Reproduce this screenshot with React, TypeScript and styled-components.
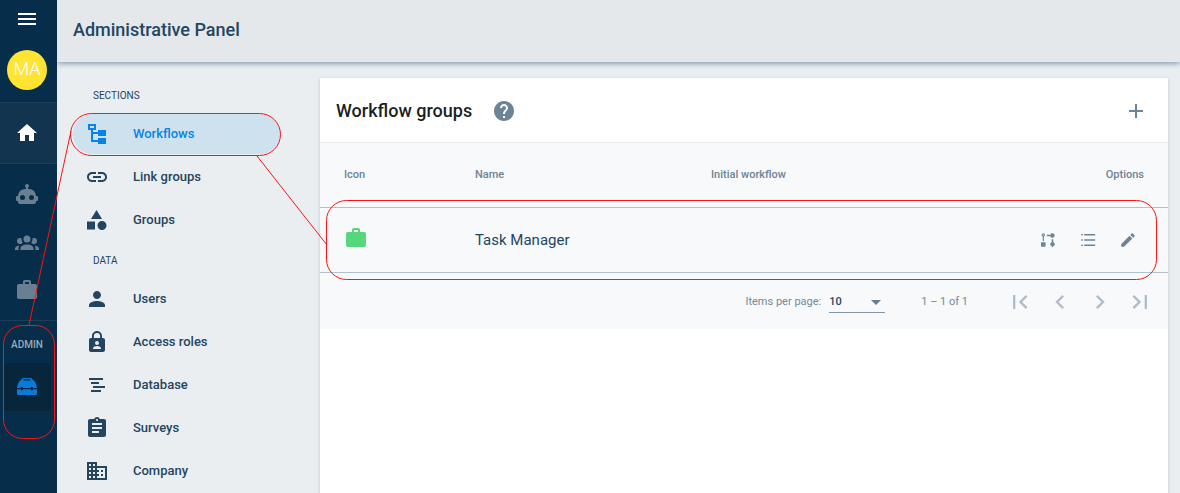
import React from "react";
import styled, { createGlobalStyle } from "styled-components";

const GlobalStyle = createGlobalStyle`
  *, *::before, *::after { box-sizing: border-box; }
  body {
    margin: 0;
    font-family: Roboto, "Liberation Sans", sans-serif;
    color: #24455f;
    background: #eaeef1;
  }
  button { font: inherit; border: 0; padding: 0; background: none; cursor: pointer; color: inherit; }
  h1, h2 { margin: 0; }
`;

/* ---------- Icons ---------- */

type IconProps = { d: string; size?: number };

const Svg = styled.svg`
  display: block;
  flex: none;
  fill: currentColor;
`;

const Icon = ({ d, size = 24 }: IconProps) => (
  <Svg width={size} height={size} viewBox="0 0 24 24" aria-hidden="true">
    <path fillRule="evenodd" d={d} />
  </Svg>
);

const paths = {
  menu: "M3 18h18v-2H3v2zm0-5h18v-2H3v2zm0-7v2h18V6H3z",
  home: "M10 20v-6h4v6h5v-8h3L12 3 2 12h3v8z",
  robot:
    "M12 2a2 2 0 0 1 2 2c0 .74-.4 1.39-1 1.73V7h1a7 7 0 0 1 7 7h1a1 1 0 0 1 1 1v3a1 1 0 0 1-1 1h-1v1a2 2 0 0 1-2 2H5a2 2 0 0 1-2-2v-1H2a1 1 0 0 1-1-1v-3a1 1 0 0 1 1-1h1a7 7 0 0 1 7-7h1V5.73c-.6-.34-1-.99-1-1.73a2 2 0 0 1 2-2M7.5 13A2.5 2.5 0 0 0 5 15.5 2.5 2.5 0 0 0 7.5 18a2.5 2.5 0 0 0 2.5-2.5A2.5 2.5 0 0 0 7.5 13m9 0a2.5 2.5 0 0 0-2.5 2.5 2.5 2.5 0 0 0 2.5 2.5 2.5 2.5 0 0 0 2.5-2.5 2.5 2.5 0 0 0-2.5-2.5z",
  people:
    "M12 5.5A3.5 3.5 0 0 1 15.5 9 3.5 3.5 0 0 1 12 12.5 3.5 3.5 0 0 1 8.5 9 3.5 3.5 0 0 1 12 5.5M5 8c.56 0 1.08.15 1.53.42-.15 1.43.27 2.85 1.13 3.96C7.16 13.34 6.16 14 5 14a3 3 0 0 1-3-3 3 3 0 0 1 3-3m14 0a3 3 0 0 1 3 3 3 3 0 0 1-3 3c-1.16 0-2.16-.66-2.66-1.62.86-1.11 1.28-2.53 1.13-3.96C17.92 8.15 18.44 8 19 8M5.5 18.25c0-2.07 2.91-3.75 6.5-3.75s6.5 1.68 6.5 3.75V20h-13v-1.75M0 20v-1.5c0-1.39 1.89-2.56 4.45-2.9-.59.68-.95 1.62-.95 2.65V20H0m24 0h-3.5v-1.75c0-1.03-.36-1.97-.95-2.65 2.56.34 4.45 1.51 4.45 2.9V20z",
  briefcase:
    "M10 2h4a2 2 0 0 1 2 2v2h4a2 2 0 0 1 2 2v11a2 2 0 0 1-2 2H4a2 2 0 0 1-2-2V8c0-1.11.89-2 2-2h4V4c0-1.11.89-2 2-2m4 4V4h-4v2h4z",
  toolbox:
    "M8.500 3h7c.8 0 1.500.5 1.500 1.200C19.500 5.200 21.500 8.500 22 13H18V12H16V13H8V12H6V13H2C2.500 8.500 4.500 5.200 7 4.200 7 3.500 7.700 3 8.500 3zM8.500 4.300V5.400H15.500V4.300zM2 14.300H6V15.300H8V14.300H16V15.300H18V14.300H22V18.500A1.500 1.500 0 0 1 20.500 20H3.500A1.500 1.500 0 0 1 2 18.500z",
  tree: "M3 2h8v6H8v2h5V8h8v6h-8v-2H8v6h5v-2h8v6h-8v-2H6V8H3zM5 4v2h4V4z",
  link: "M3.9 12c0-1.71 1.39-3.1 3.1-3.1h4V7H7c-2.76 0-5 2.24-5 5s2.24 5 5 5h4v-1.900H7c-1.710 0-3.100-1.390-3.100-3.100zM8 13h8v-2H8v2zm9-6h-4v1.900h4c1.710 0 3.100 1.390 3.100 3.100s-1.390 3.100-3.100 3.100h-4V17h4c2.760 0 5-2.240 5-5s-2.240-5-5-5z",
  shapes:
    "M10 13.500v8H2v-8h8M11.500 2l5.500 9H6l5.500-9m5.500 11c2.500 0 4.500 2 4.500 4.500S19.500 22 17 22s-4.500-2-4.500-4.500 2-4.500 4.500-4.500z",
  person:
    "M12 12c2.210 0 4-1.790 4-4s-1.790-4-4-4-4 1.790-4 4 1.790 4 4 4zm0 2c-2.670 0-8 1.340-8 4v2h16v-2c0-2.660-5.330-4-8-4z",
  lockPerson:
    "M18 8h-1V6c0-2.760-2.240-5-5-5S7 3.240 7 6v2H6c-1.100 0-2 .9-2 2v10c0 1.100.9 2 2 2h12c1.100 0 2-.9 2-2V10c0-1.100-.9-2-2-2zM8.900 8V6a3.100 3.100 0 0 1 6.200 0v2zM12 11a2 2 0 1 1 0 4 2 2 0 0 1 0-4zM8 19v-.8c0-1.400 2.600-2.200 4-2.200s4 .8 4 2.200V19z",
  lines: "M4 5h14v2H4zM6 9h8v2H6zM8 13h12v2H8zM6 17h10v2H6z",
  assignment:
    "M19 3h-4.180C14.400 1.840 13.300 1 12 1c-1.300 0-2.400.84-2.820 2H5c-1.100 0-2 .9-2 2v14c0 1.100.9 2 2 2h14c1.100 0 2-.9 2-2V5c0-1.100-.9-2-2-2zm-7 0c.55 0 1 .45 1 1s-.45 1-1 1-1-.45-1-1 .45-1 1-1zm2 14H7v-2h7v2zm3-4H7v-2h10v2zm0-4H7V7h10v2z",
  domain:
    "M12 7V3H2v18h20V7H12zM6 19H4v-2h2v2zm0-4H4v-2h2v2zm0-4H4V9h2v2zm0-4H4V5h2v2zm4 12H8v-2h2v2zm0-4H8v-2h2v2zm0-4H8V9h2v2zm0-4H8V5h2v2zm10 12h-8v-2h2v-2h-2v-2h2v-2h-2V9h8v10zm-2-8h-2v2h2v-2zm0 4h-2v2h2v-2z",
  help: "M12 2C6.480 2 2 6.480 2 12s4.480 10 10 10 10-4.480 10-10S17.520 2 12 2zm1 17h-2v-2h2v2zm2.070-7.750l-.9.920C13.450 12.900 13 13.500 13 15h-2v-.5c0-1.100.45-2.100 1.170-2.830l1.240-1.260c.37-.36.59-.86.59-1.410 0-1.100-.9-2-2-2s-2 .9-2 2H8c0-2.210 1.790-4 4-4s4 1.790 4 4c0 .88-.36 1.680-.93 2.250z",
  plus: "M19 13h-6v6h-2v-6H5v-2h6V5h2v6h6v2z",
  flow: "M5.700 3a2.300 2.300 0 0 1 .8 4.450V13.500H5V7.450A2.300 2.300 0 0 1 5.700 3zM5.700 4.500a.8.8 0 1 0 .01 0zM2.700 15H8.700V21H2.700zM10.500 5H15.100A3 3 0 1 1 15.100 7H10.500zM17 11h2v3.200L21.500 17.500 18 21.500 14.500 17.500 17 14.200z",
  list: "M3 4h2v2H3zM7 4h14.500v2H7zM3 11h2v2H3zM7 11h14.500v2H7zM3 18h2v2H3zM7 18h14.500v2H7z",
  pencil:
    "M3 17.250V21h3.750L17.810 9.940l-3.750-3.750L3 17.250zM20.710 7.040c.39-.39.39-1.020 0-1.410l-2.340-2.340c-.39-.39-1.020-.39-1.410 0l-1.830 1.830 3.750 3.750 1.830-1.830z",
  first: "M18.410 16.590L13.820 12l4.590-4.590L17 6l-6 6 6 6zM6 6h2v12H6z",
  prev: "M15.410 7.410L14 6l-6 6 6 6 1.410-1.410L10.830 12z",
  next: "M10 6L8.590 7.410 13.170 12l-4.580 4.590L10 18l6-6z",
  last: "M5.590 7.410L10.180 12l-4.590 4.590L7 18l6-6-6-6zM16 6h2v12h-2z",
};

/* ---------- Shell ---------- */

const Page = styled.div`
  position: relative;
  display: flex;
  min-height: 100vh;
`;

const Rail = styled.nav`
  flex: none;
  width: 57px;
  background: #062d49;
  display: flex;
  flex-direction: column;
`;

const RailButton = styled.button`
  width: 54px;
  height: 38px;
  display: grid;
  place-items: center;
  color: #fff;
`;

const Avatar = styled.button`
  width: 40px;
  height: 40px;
  margin: 12px 7px;
  border-radius: 50%;
  background: #ffe434;
  color: #fff;
  font-size: 18px;
  font-weight: 300;
  line-height: 38px;
  padding-bottom: 2px;
`;

const RailLink = styled.a<{ $current?: boolean }>`
  height: ${(p) => (p.$current ? 62 : 48)}px;
  padding-right: 3px;
  display: grid;
  place-items: center;
  color: ${(p) => (p.$current ? "#fff" : "#6a8092")};
  background: ${(p) => (p.$current ? "#12344f" : "none")};
  border: solid #1d3e58;
  border-width: ${(p) => (p.$current ? "1px 0" : "0")};
`;

const RailGroup = styled.div`
  padding: 6px 0;
  border-bottom: 1px solid #1d3e58;
`;

const RailLabel = styled.div`
  height: 42px;
  padding: 4px 3px 0 0;
  display: grid;
  place-items: center;
  font-size: 10px;
  font-weight: 500;
  color: #9babb7;
`;

const AdminLink = styled.a`
  width: 48px;
  height: 48px;
  margin-left: 3px;
  display: grid;
  place-items: center;
  border-radius: 4px;
  background: #08263b;
  color: #0a7ad8;
`;

const Main = styled.main`
  flex: 1;
  min-width: 0;
  display: flex;
  flex-direction: column;
`;

const TopBar = styled.header`
  position: relative;
  height: 62px;
  padding: 0 16px;
  display: flex;
  align-items: center;
  background: #e4e8eb;
  box-shadow: 0 1px 6px #6f8ba2;
  clip-path: inset(0 0 -16px 0);
`;

const PageTitle = styled.h1`
  font-size: 18px;
  line-height: 24px;
  font-weight: 500;
  padding-bottom: 2px;
`;

const Body = styled.div`
  flex: 1;
  display: flex;
  padding: 16px 12px 0 16px;
`;

/* ---------- Section menu ---------- */

const SideMenu = styled.nav`
  flex: none;
  width: 247px;
`;

const MenuLabel = styled.div`
  height: 36px;
  padding-left: 20px;
  font-size: 10px;
  line-height: 36px;
`;

const MenuLink = styled.a<{ $active?: boolean }>`
  width: 207px;
  height: 40px;
  margin-bottom: 3px;
  padding-left: 12px;
  display: flex;
  align-items: center;
  gap: 24px;
  border-radius: 20px;
  font-size: 13px;
  line-height: 16px;
  font-weight: 500;
  text-decoration: none;
  color: ${(p) => (p.$active ? "#0784e9" : "#24455f")};
  background: ${(p) => (p.$active ? "#cee1ef" : "none")};
`;

/* ---------- Workflow panel ---------- */

const Panel = styled.section`
  flex: 1;
  min-width: 0;
  background: #fff;
  box-shadow: 0 1px 3px #24455f40;
`;

const PanelHeader = styled.header`
  height: 65px;
  padding: 2px 20px 0 16px;
  display: flex;
  align-items: center;
  gap: 20px;
  border-bottom: 1px solid #e6eaed;
  color: #6d8496;
`;

const PanelTitle = styled.h2`
  font-size: 18px;
  line-height: 24px;
  font-weight: 500;
  color: #1c1f21;
`;

const IconButton = styled.button<{ $size?: number; $end?: boolean }>`
  width: ${(p) => p.$size ?? 24}px;
  height: ${(p) => p.$size ?? 24}px;
  margin-left: ${(p) => (p.$end ? "auto" : "0")};
  display: grid;
  place-items: center;
`;

const Table = styled.table`
  width: 100%;
  table-layout: fixed;
  border-collapse: separate;
  border-spacing: 0;
  background: #f7f9fb;
`;

const HeadCell = styled.th<{ $width?: number; $end?: boolean }>`
  width: ${(p) => (p.$width ? `${p.$width}px` : "auto")};
  height: 65px;
  padding: 0 24px 2px 0;
  border-bottom: 1px solid #b3bfc9;
  text-align: ${(p) => (p.$end ? "right" : "left")};
  font-size: 11px;
  font-weight: 500;
  color: #6d8496;
  &:first-child { padding-left: 24px; }
`;

const Cell = styled.td`
  height: 65px;
  padding: 0;
  border-bottom: 1px solid #b3bfc9;
  font-size: 15px;
`;

const GlyphCell = styled(Cell)`
  padding: 0 0 4px 24px;
  color: #57d77b;
`;

const Actions = styled.div`
  display: flex;
  justify-content: flex-end;
  padding-right: 20px;
  color: #6d8496;
`;

const Pager = styled.footer`
  height: 56px;
  padding: 2px 8px 0 0;
  display: flex;
  align-items: center;
  justify-content: flex-end;
  background: #f7f9fb;
  font-size: 11px;
  line-height: 14px;
  color: #74899a;
`;

const SizeField = styled.label`
  display: flex;
  align-items: center;
  gap: 8px;
`;

const SelectBox = styled.span`
  position: relative;
  display: block;
  width: 56px;
  border-bottom: 1px solid #8195a8;
  &::after {
    content: "";
    position: absolute;
    right: 4px;
    top: 8px;
    border: 5px solid transparent;
    border-top-color: #647d92;
    border-bottom-width: 0;
    pointer-events: none;
  }
`;

const Select = styled.select`
  appearance: none;
  display: block;
  width: 100%;
  height: 20px;
  padding: 0;
  border: 0;
  background: none;
  font: inherit;
  font-weight: 500;
  color: #24455f;
`;

const Range = styled.span`
  margin: 0 32px 0 36px;
`;

const PagerButtons = styled.div`
  display: flex;
  color: #b0bdc8;
`;

/* ---------- Callouts over the page ---------- */

const Callouts = styled.svg`
  position: absolute;
  inset: 0;
  width: 100%;
  height: 100%;
  pointer-events: none;
  fill: none;
  stroke: #fb1414;
`;

const RowOutline = styled.rect`
  width: calc(100% - 350px);
`;

const sections = [
  { label: "Workflows", icon: paths.tree, active: true },
  { label: "Link groups", icon: paths.link },
  { label: "Groups", icon: paths.shapes },
];

const data = [
  { label: "Users", icon: paths.person },
  { label: "Access roles", icon: paths.lockPerson },
  { label: "Database", icon: paths.lines },
  { label: "Surveys", icon: paths.assignment },
  { label: "Company", icon: paths.domain },
];

type MenuEntry = { label: string; icon: string; active?: boolean };

const MenuItems = ({ entries }: { entries: MenuEntry[] }) => (
  <>
    {entries.map((e) => (
      <MenuLink key={e.label} href="#" $active={e.active}>
        <Icon d={e.icon} />
        {e.label}
      </MenuLink>
    ))}
  </>
);

export default function App() {
  return (
    <Page>
      <GlobalStyle />
      <Rail>
        <RailButton aria-label="Menu"><Icon d={paths.menu} /></RailButton>
        <Avatar>MA</Avatar>
        <RailLink href="#" $current aria-label="Home"><Icon d={paths.home} /></RailLink>
        <RailGroup>
          <RailLink href="#" aria-label="Bots"><Icon d={paths.robot} /></RailLink>
          <RailLink href="#" aria-label="People"><Icon d={paths.people} /></RailLink>
          <RailLink href="#" aria-label="Work"><Icon d={paths.briefcase} /></RailLink>
        </RailGroup>
        <RailLabel>ADMIN</RailLabel>
        <AdminLink href="#" aria-label="Administration"><Icon d={paths.toolbox} /></AdminLink>
      </Rail>

      <Main>
        <TopBar><PageTitle>Administrative Panel</PageTitle></TopBar>
        <Body>
          <SideMenu>
            <MenuLabel>SECTIONS</MenuLabel>
            <MenuItems entries={sections} />
            <MenuLabel>DATA</MenuLabel>
            <MenuItems entries={data} />
          </SideMenu>

          <Panel>
            <PanelHeader>
              <PanelTitle>Workflow groups</PanelTitle>
              <IconButton aria-label="Help"><Icon d={paths.help} /></IconButton>
              <IconButton $end aria-label="Add group"><Icon d={paths.plus} /></IconButton>
            </PanelHeader>
            <Table>
              <thead>
                <tr>
                  <HeadCell $width={155}>Icon</HeadCell>
                  <HeadCell $width={236}>Name</HeadCell>
                  <HeadCell>Initial workflow</HeadCell>
                  <HeadCell $width={160} $end>Options</HeadCell>
                </tr>
              </thead>
              <tbody>
                <tr>
                  <GlyphCell><Icon d={paths.briefcase} /></GlyphCell>
                  <Cell>Task Manager</Cell>
                  <Cell />
                  <Cell>
                    <Actions>
                      <IconButton $size={40} aria-label="Edit flow"><Icon d={paths.flow} size={18} /></IconButton>
                      <IconButton $size={40} aria-label="Show list"><Icon d={paths.list} size={18} /></IconButton>
                      <IconButton $size={40} aria-label="Edit"><Icon d={paths.pencil} size={18} /></IconButton>
                    </Actions>
                  </Cell>
                </tr>
              </tbody>
            </Table>
            <Pager>
              <SizeField>
                Items per page:
                <SelectBox>
                  <Select defaultValue="10">
                    <option>10</option>
                    <option>25</option>
                    <option>50</option>
                  </Select>
                </SelectBox>
              </SizeField>
              <Range>1 – 1 of 1</Range>
              <PagerButtons>
                <IconButton $size={40} aria-label="First page"><Icon d={paths.first} size={28} /></IconButton>
                <IconButton $size={40} aria-label="Previous page"><Icon d={paths.prev} size={28} /></IconButton>
                <IconButton $size={40} aria-label="Next page"><Icon d={paths.next} size={28} /></IconButton>
                <IconButton $size={40} aria-label="Last page"><Icon d={paths.last} size={28} /></IconButton>
              </PagerButtons>
            </Pager>
          </Panel>
        </Body>
      </Main>

      <Callouts aria-hidden="true">
        <rect x="3.5" y="325.5" width="51" height="113" rx="19" />
        <rect x="70.5" y="113.5" width="210" height="42" rx="21" />
        <RowOutline x="326.5" y="200.5" height="79" rx="20" />
        <path d="M71 131L29 325M257 156L327 245" />
      </Callouts>
    </Page>
  );
}
